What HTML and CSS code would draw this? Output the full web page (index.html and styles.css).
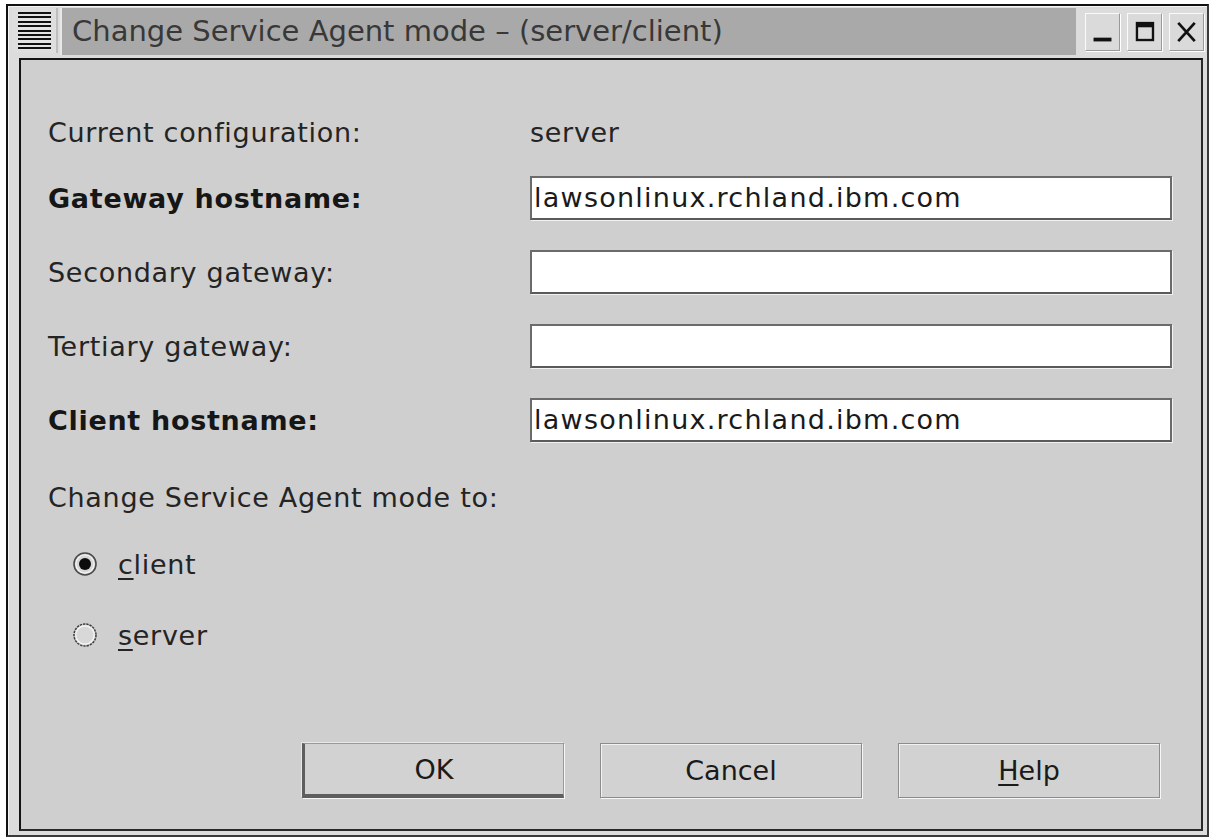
FILE: index.html
```html
<!DOCTYPE html>
<html lang="en">
<head>
<meta charset="utf-8">
<title>Change Service Agent mode</title>
<link rel="stylesheet" href="styles.css">
</head>
<body>
<div class="window">
  <div class="titlebar">
    <div class="menu-btn"><span class="menu-lines"></span></div>
    <div class="title">Change Service Agent mode – (server/client)</div>
    <div class="controls">
      <div class="ctl">
        <svg width="35" height="38" viewBox="0 0 35 38"><rect x="8" y="25" width="19" height="4" fill="#111"/></svg>
      </div>
      <div class="ctl">
        <svg width="35" height="38" viewBox="0 0 35 38"><rect x="9.5" y="9.5" width="17" height="18" fill="none" stroke="#111" stroke-width="2.5"/><rect x="9" y="9" width="18" height="5" fill="#111"/></svg>
      </div>
      <div class="ctl">
        <svg width="36" height="38" viewBox="0 0 36 38"><path d="M9 9 L27 29 M27 9 L9 29" stroke="#111" stroke-width="3" fill="none"/></svg>
      </div>
    </div>
  </div>

  <div class="content">
    <div class="form">
      <div class="row info">
        <span class="label">Current configuration:</span>
        <span class="value">server</span>
      </div>
      <div class="row">
        <span class="label bold">Gateway hostname:</span>
        <div class="field">lawsonlinux.rchland.ibm.com</div>
      </div>
      <div class="row">
        <span class="label">Secondary gateway:</span>
        <div class="field"></div>
      </div>
      <div class="row">
        <span class="label">Tertiary gateway:</span>
        <div class="field"></div>
      </div>
      <div class="row">
        <span class="label bold">Client hostname:</span>
        <div class="field">lawsonlinux.rchland.ibm.com</div>
      </div>
    </div>

    <div class="mode-label">Change Service Agent mode to:</div>

    <div class="radios">
      <div class="radio">
        <svg class="dot" width="26" height="26" viewBox="0 0 26 26">
          <circle cx="13" cy="13" r="11" fill="#d6d6d6" stroke="#4a4a4a" stroke-width="1.6"/>
          <circle cx="13" cy="13" r="9" fill="none" stroke="#f4f4f4" stroke-width="1.2"/>
          <circle cx="13" cy="13" r="6" fill="#0d0d0d"/>
        </svg>
        <span><u>c</u>lient</span>
      </div>
      <div class="radio">
        <svg class="dot" width="26" height="26" viewBox="0 0 26 26">
          <circle cx="13" cy="13" r="11" fill="#d8d8d8" stroke="#3e3e3e" stroke-width="1.5" stroke-dasharray="2.4 0.9"/>
          <circle cx="13" cy="13" r="9.2" fill="none" stroke="#f6f6f6" stroke-width="1.2"/>
        </svg>
        <span><u>s</u>erver</span>
      </div>
    </div>

    <div class="buttons">
      <div class="btn default">OK</div>
      <div class="btn">Cancel</div>
      <div class="btn"><u>H</u>elp</div>
    </div>
  </div>
</div>
</body>
</html>
```

FILE: styles.css
```css
html, body {
  margin: 0;
  padding: 0;
  background: #ffffff;
}

body {
  font-family: "DejaVu Sans", "Liberation Sans", sans-serif;
  color: #242424;
}

/* outer window frame */
.window {
  margin: 4px 0 0 6px;
  width: 1203px;
  height: 833px;
  box-sizing: border-box;
  border-top: 2px solid #111;
  border-left: 2px solid #111;
  border-right: 2px solid #3a3a3a;
  border-bottom: 2px solid #3a3a3a;
  background: #dcdcdc;
  box-shadow: inset 1px 1px 0 #f4f4f4;
  display: flex;
  flex-direction: column;
}

/* title row */
.titlebar {
  display: flex;
  height: 50px;
  box-sizing: border-box;
  padding: 2px 3px 0 4px;
}

.menu-btn {
  width: 46px;
  height: 45px;
  box-sizing: border-box;
  background: #dedede;
  border-right: 2px solid #bdbdbd;
  padding: 4px 5px 0 6px;
}

.menu-lines {
  display: block;
  height: 38px;
  background: repeating-linear-gradient(to bottom, #111 0, #111 2px, #e4e4e4 2px, #e4e4e4 4.4px);
}

.title {
  flex: 1;
  margin-left: 2px;
  height: 47px;
  background: #a9a9a9;
  border-left: 2px solid #e8e8e8;
  color: #383838;
  font-size: 29px;
  line-height: 46px;
  padding-left: 10px;
  white-space: nowrap;
}

.controls {
  display: flex;
  gap: 7px;
  padding: 5px 0 0 9px;
}

.ctl {
  width: 35px;
  height: 38px;
  box-sizing: border-box;
  background: #dadada;
  border-top: 1px solid #fafafa;
  border-left: 1px solid #fafafa;
  border-right: 1px solid #9a9a9a;
  border-bottom: 1px solid #9a9a9a;
  box-shadow: 1px 1px 0 #ffffff;
  display: flex;
  align-items: center;
  justify-content: center;
}

.ctl svg {
  display: block;
}

/* dialog body */
.content {
  flex: 1;
  margin: 2px 4px 4px 11px;
  border: 2px solid #141414;
  border-right-color: #2a2a2a;
  border-bottom-color: #2a2a2a;
  background: #cfcfcf;
  padding: 50px 29px 31px 27px;
  display: flex;
  flex-direction: column;
  font-size: 27px;
  letter-spacing: 0.7px;
}

.form {
  display: flex;
  flex-direction: column;
  gap: 30px;
}

.row {
  display: grid;
  grid-template-columns: 482px 1fr;
  align-items: center;
  height: 44px;
}

.row.info {
  margin-bottom: -8px;
}

.label, .value {
  white-space: nowrap;
}

.bold {
  font-weight: bold;
  color: #161616;
}

.field {
  height: 44px;
  box-sizing: border-box;
  background: #ffffff;
  border: 2px solid #6b6b6b;
  border-bottom-color: #5a5a5a;
  box-shadow: 1px 1px 0 #f2f2f2;
  padding-left: 2px;
  line-height: 40px;
  color: #1a1a1a;
  letter-spacing: 1.25px;
  white-space: nowrap;
}

.mode-label {
  margin-top: 39px;
  height: 34px;
  line-height: 34px;
  white-space: nowrap;
}

.radios {
  margin-top: 29px;
  display: flex;
  flex-direction: column;
  gap: 31px;
  padding-left: 24px;
}

.radio {
  display: flex;
  align-items: center;
  height: 40px;
  gap: 20px;
}

.dot {
  display: block;
  flex: none;
}

u {
  text-underline-offset: 4px;
  text-decoration-thickness: 2px;
}

.buttons {
  margin-top: auto;
  display: flex;
  gap: 36px;
  padding-left: 254px;
}

.btn {
  width: 262px;
  height: 55px;
  box-sizing: border-box;
  background: #d2d2d2;
  border: 1px solid #8c8c8c;
  box-shadow: 1px 1px 0 #f6f6f6, inset 1px 1px 0 #f2f2f2;
  display: flex;
  align-items: center;
  justify-content: center;
  color: #1a1a1a;
  letter-spacing: 0;
}

.btn.default {
  border-left: 3px solid #5e5e5e;
  border-bottom: 4px solid #5e5e5e;
  border-top-color: #9a9a9a;
  border-right-color: #9a9a9a;
  box-shadow: 1px 1px 0 #f6f6f6, -1px -1px 0 #e8e8e8;
}
```
